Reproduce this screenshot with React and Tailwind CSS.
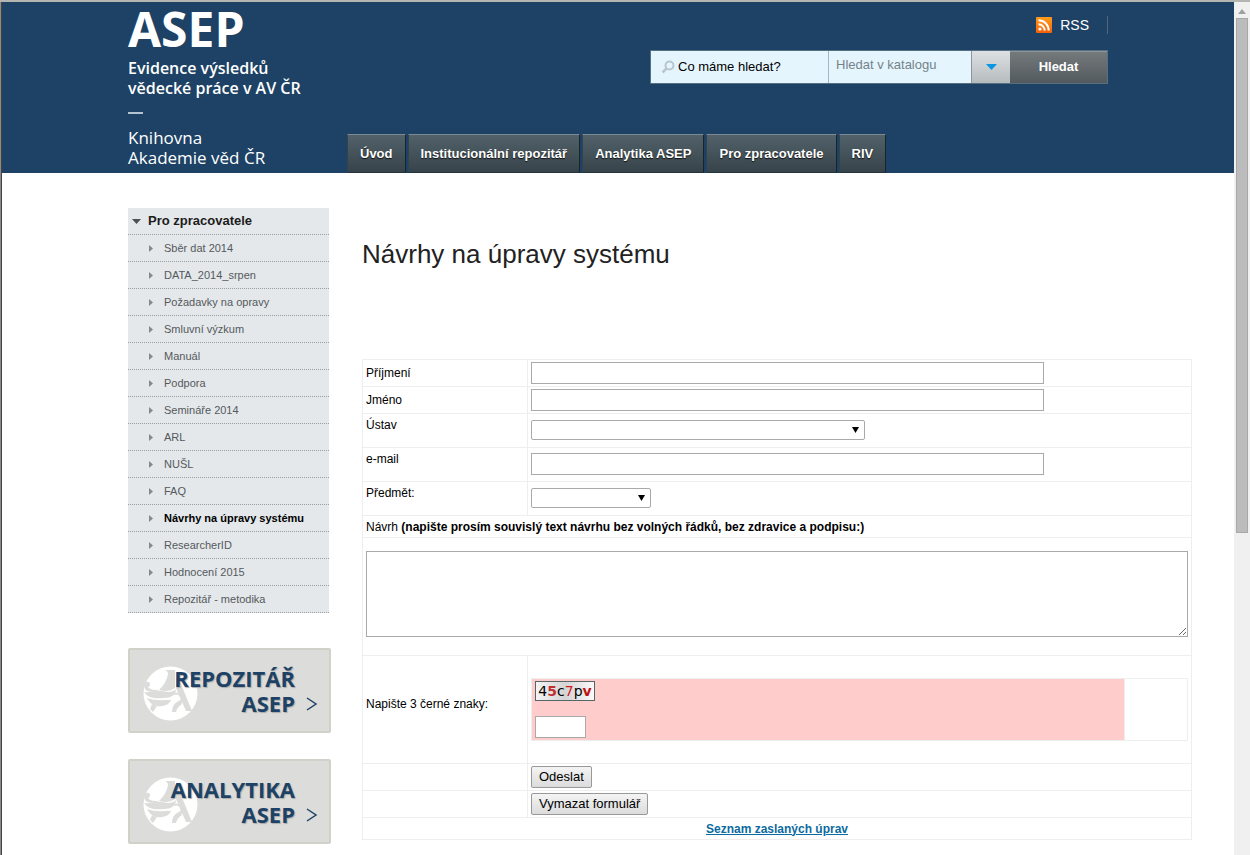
const mainNav = ['Úvod', 'Institucionální repozitář', 'Analytika ASEP', 'Pro zpracovatele', 'RIV'];

const sideNav = [
  'Sběr dat 2014',
  'DATA_2014_srpen',
  'Požadavky na opravy',
  'Smluvní výzkum',
  'Manuál',
  'Podpora',
  'Semináře 2014',
  'ARL',
  'NUŠL',
  'FAQ',
  'Návrhy na úpravy systému',
  'ResearcherID',
  'Hodnocení 2015',
  'Repozitář - metodika',
];

const activeItem = 'Návrhy na úpravy systému';

function RssIcon() {
  return (
    <svg className="h-4 w-4" viewBox="0 0 16 16" aria-hidden="true">
      <defs>
        <linearGradient id="rss" x1="0" y1="0" x2="0" y2="1">
          <stop offset="0" stopColor="#ff9c1a" />
          <stop offset="1" stopColor="#f4610c" />
        </linearGradient>
      </defs>
      <rect width="16" height="16" rx="1" fill="url(#rss)" />
      <circle cx="4" cy="12" r="1.6" fill="#fff" />
      <path d="M2.5 7.3a6.2 6.2 0 0 1 6.2 6.2M2.5 3.3a10.2 10.2 0 0 1 10.2 10.2" fill="none" stroke="#fff" strokeWidth="2" />
    </svg>
  );
}

function Emblem() {
  return (
    <svg className="h-[55px] w-[55px]" viewBox="0 0 55 55" aria-hidden="true">
      <circle cx="27.5" cy="27.5" r="27" fill="#fff" />
      <g fill="#dcdddb">
        <path d="M22 4h10v18c-4 3-10 4-16 2 5-5 8-10 9-16 0-2-1-3-3-4z" />
        <path d="M2 18c0-3 5-3 5 0 0 2-1 3-2 3 2 3 7 3 11 3-6 3-12 2-14-1-1-2-1-3 0-5z" />
        <path d="M1 26c6 1 10-2 17-1 6 1 11 2 15-2 0 6-5 9-12 9C12 33 5 32 1 26z" />
        <path d="M4 32c7 3 16 2 24 2-2 5-8 7-14 6-5-1-8-4-10-8z" />
        <path d="M9 38l5 2-4 6-3-3z" />
        <path d="M34 10l4 8 11 27h-6L33 22z" />
        <path d="M29 46c0-6 3-10 9-12l1 4c-3 2-5 4-6 8z" />
      </g>
      <path d="M30 28c6-2 10 2 8 8" fill="none" stroke="#dcdddb" strokeWidth="2" />
    </svg>
  );
}

function Header() {
  return (
    <header className="flex h-[171px] items-stretch bg-[#1d4265] pr-[126px] pl-[126px] text-white">
      <a href="#" className="w-[219px] shrink-0 font-['Open_Sans',sans-serif]">
        <span className="block text-[48px] leading-[54px] font-bold">ASEP</span>
        <span className="mt-[2px] block text-base leading-5 font-semibold whitespace-nowrap">
          Evidence výsledků
          <br />
          vědecké práce v AV ČR
        </span>
        <span className="mt-[14px] mb-[14px] block h-[2px] w-[15px] bg-[#b4c3d0]" />
        <span className="block text-[17px] leading-5 whitespace-nowrap">
          Knihovna
          <br />
          Akademie věd ČR
        </span>
      </a>
      <div className="flex flex-1 flex-col justify-between">
        <div className="flex flex-col items-end pt-[14px]">
          <a href="#" className="flex h-[18px] items-center gap-2 border-r border-[#4f687f] pr-[18px] text-sm">
            <RssIcon />
            RSS
          </a>
          <form className="mt-4 flex h-[34px] w-[458px] border border-[#55707f] text-sm" onSubmit={(e) => e.preventDefault()}>
            <label htmlFor="q" className="flex w-[177px] items-center bg-[#e5f5fe] pl-[10px] text-[13px] text-black">
              <svg className="mr-[3px] h-[14px] w-[14px]" viewBox="0 0 14 14" fill="none" stroke="#b9c6cf" aria-hidden="true">
                <circle cx="8.5" cy="5.5" r="4" strokeWidth="2" />
                <path d="M5.500 8.500L1.500 12.500" strokeWidth="2.500" />
              </svg>
              Co máme hledat?
            </label>
            <input
              id="q"
              placeholder="Hledat v katalogu"
              className="min-w-0 flex-1 border-l border-[#a3b6c2] bg-[#e5f5fe] px-[7px] pb-1 text-[13px] placeholder:text-[#75828a]"
            />
            <button type="button" aria-label="Katalogy" className="flex w-[39px] items-center justify-center border-l border-[#8c979d] bg-linear-to-b from-[#dde1e4] to-[#b6bbbe]">
              <svg className="h-[6px] w-[11px]" viewBox="0 0 11 6" fill="#0a96e4" aria-hidden="true">
                <path d="M0 0h11L5.500 6z" />
              </svg>
            </button>
            <button className="w-[97px] border-t border-[#8f9598] bg-linear-to-b from-[#74797c] to-[#535a5d] text-[13px] font-bold">Hledat</button>
          </form>
        </div>
        <nav className="flex gap-[2px]">
          {mainNav.map((item) => (
            <a
              key={item}
              href="#"
              className="flex h-[39px] items-center border border-t-[#7b8a91] border-r-[#17242c] border-b-[#26343b] border-l-[#2f4450] bg-linear-to-b from-[#52626a] to-[#37434a] px-3 text-[13px] font-bold whitespace-nowrap text-shadow-[0_1px_1px_#111]"
            >
              {item}
            </a>
          ))}
        </nav>
      </div>
    </header>
  );
}

function Banner({ title }) {
  return (
    <a href="#" className="relative flex h-[85px] items-center rounded-xs border-2 border-[#d0d1c9] bg-[#dcdddb] font-['Open_Sans',sans-serif] text-[#1d4265]">
      <span className="absolute top-4 left-[13px]">
        <Emblem />
      </span>
      <span className="relative w-[165px] text-right text-[22px] leading-[25px] font-bold whitespace-nowrap text-shadow-[1px_1px_1px_#aaa]">
        <span className="block">{title}</span>
        <span className="block">ASEP</span>
      </span>
      <svg className="relative mt-[26px] ml-[11px] h-[14px] w-3" viewBox="0 0 12 14" fill="none" stroke="#1d4265" strokeWidth="1.500" aria-hidden="true">
        <path d="M1 1l9 6-9 6" />
      </svg>
    </a>
  );
}

function Sidebar() {
  return (
    <aside className="w-[203px] shrink-0">
      <nav className="mr-[2px] bg-[#e4e8eb]">
        <a href="#" className="flex h-[27px] items-center border-b border-dotted border-[#9a9ea1] pl-1 text-[13px] font-bold text-[#1c1c1c]">
          <svg className="mr-[7px] h-[5px] w-[9px]" viewBox="0 0 9 5" fill="#4c5154" aria-hidden="true">
            <path d="M0 0h9L4.500 5z" />
          </svg>
          Pro zpracovatele
        </a>
        <ul>
          {sideNav.map((item) => (
            <li key={item} className="border-b border-dotted border-[#9a9ea1]">
              <a
                href="#"
                className={`flex h-[26px] items-center pl-[21px] text-[11px] ${item === activeItem ? 'font-bold text-black' : 'text-[#55595c]'}`}
              >
                <svg className="mr-[11px] h-[7px] w-1" viewBox="0 0 4 7" fill="#85898c" aria-hidden="true">
                  <path d="M0 0l4 3.500L0 7z" />
                </svg>
                {item}
              </a>
            </li>
          ))}
        </ul>
      </nav>
      <div className="mt-[35px] flex flex-col gap-[26px]">
        <Banner title="REPOZITÁŘ" />
        <Banner title="ANALYTIKA" />
      </div>
    </aside>
  );
}

const cell = 'border border-[#eee] px-[3px] py-0';
const field = 'block border border-[#a9a9a9] bg-white';

function SelectField({ id, className }) {
  return (
    <span className={`relative block h-5 ${className}`}>
      <select id={id} className="block h-5 w-full appearance-none rounded-xs border border-[#a9a9a9] bg-white">
        <option></option>
      </select>
      <svg className="pointer-events-none absolute top-[7px] right-[6px] h-[6px] w-[7px]" viewBox="0 0 7 6" aria-hidden="true">
        <path d="M0 0h7L3.500 6z" />
      </svg>
    </span>
  );
}

function Captcha() {
  return (
    <span role="img" aria-label="45c7pv" className="flex h-5 w-[60px] items-center justify-center border border-[#556666] bg-linear-to-r from-[#f4f4f4] via-[#d4d4d4] to-[#fafafa] font-['DejaVu_Sans',sans-serif] text-sm leading-4">
      4<b className="text-[#c03030]">5</b>c<span className="text-[#d01c1c]">7</span>p<b className="text-[#c01414]">v</b>
    </span>
  );
}

function SuggestionForm() {
  return (
    <form onSubmit={(e) => e.preventDefault()}>
      <table className="w-full table-fixed border-collapse text-xs text-black">
        <colgroup>
          <col className="w-[165px]" />
          <col />
        </colgroup>
        <tbody>
          <tr className="h-[27px]">
            <td className={cell}><label htmlFor="surname">Příjmení</label></td>
            <td className={cell}><input id="surname" className={`${field} h-[22px] w-[513px]`} /></td>
          </tr>
          <tr className="h-[27px]">
            <td className={cell}><label htmlFor="name">Jméno</label></td>
            <td className={cell}><input id="name" className={`${field} h-[22px] w-[513px]`} /></td>
          </tr>
          <tr className="h-[34px]">
            <td className={`${cell} pt-[3px] align-top`}><label htmlFor="institute">Ústav</label></td>
            <td className={`${cell} pb-[2px]`}><SelectField id="institute" className="w-[334px]" /></td>
          </tr>
          <tr className="h-[34px]">
            <td className={`${cell} pt-[3px] align-top`}><label htmlFor="email">e-mail</label></td>
            <td className={`${cell} pb-[2px]`}><input id="email" type="email" className={`${field} h-[22px] w-[513px]`} /></td>
          </tr>
          <tr className="h-[34px]">
            <td className={`${cell} pt-[3px] align-top`}><label htmlFor="subject">Předmět:</label></td>
            <td className={`${cell} pb-[2px]`}><SelectField id="subject" className="w-[120px]" /></td>
          </tr>
          <tr className="h-[22px]">
            <td colSpan="2" className={cell}>
              <label htmlFor="text">
                Návrh <b>(napište prosím souvislý text návrhu bez volných řádků, bez zdravice a podpisu:)</b>
              </label>
            </td>
          </tr>
          <tr className="h-[118px]">
            <td colSpan="2" className={`${cell} pt-[13px] align-top`}>
              <textarea id="text" className={`${field} h-[86px] w-full`} />
            </td>
          </tr>
          <tr className="h-[108px]">
            <td className={`${cell} pb-3`}><label htmlFor="code">Napište 3 černé znaky:</label></td>
            <td className={cell}>
              <table className="w-full table-fixed border-collapse">
                <tbody>
                  <tr>
                    <td className="border border-[#eee] bg-[#fcc] px-[3px] py-[2px]">
                      <Captcha />
                      <input id="code" className={`${field} mt-[15px] h-[22px] w-[51px]`} />
                    </td>
                    <td className="w-[63px] border border-[#eee]"></td>
                  </tr>
                </tbody>
              </table>
            </td>
          </tr>
          <tr className="h-[27px]">
            <td className={cell}></td>
            <td className={cell}>
              <button className="block h-[22px] rounded-xs border border-[#999] bg-linear-to-b from-[#f4f4f4] to-[#dcdcdc] px-[7px] text-[13px] leading-5">Odeslat</button>
            </td>
          </tr>
          <tr className="h-[27px]">
            <td className={cell}></td>
            <td className={cell}>
              <button type="reset" className="block h-[22px] rounded-xs border border-[#999] bg-linear-to-b from-[#f4f4f4] to-[#dcdcdc] px-[7px] text-[13px] leading-5">Vymazat formulář</button>
            </td>
          </tr>
          <tr className="h-[22px]">
            <td colSpan="2" className={`${cell} text-center`}>
              <a href="#" className="font-bold text-[#0b6a9f] underline">Seznam zaslaných úprav</a>
            </td>
          </tr>
        </tbody>
      </table>
    </form>
  );
}

function Scrollbar() {
  return (
    <div className="flex w-4 shrink-0 flex-col bg-[#f0f0f0] px-[2px]" aria-hidden="true">
      <svg className="mx-auto mt-[7px] h-[5px] w-2" viewBox="0 0 8 5" fill="#a0a0a0">
        <path d="M4 0l4 5H0z" />
      </svg>
      <div className="mt-1 h-[515px] w-3 border border-[#a8a8a8] bg-[#bcbcbc]" />
    </div>
  );
}

export default function App() {
  return (
    <div className="flex h-screen overflow-hidden border-t-2 border-[#b4b4b0] bg-white font-['Liberation_Sans',Arial,sans-serif]">
      <div className="w-[2px] shrink-0 border-r border-[#444] bg-[#8a8a8a]" />
      <div className="min-w-0 flex-1">
        <Header />
        <div className="flex gap-[31px] pt-[35px] pr-[42px] pl-[126px]">
          <Sidebar />
          <main className="min-w-0 flex-1">
            <h1 className="mt-[30px] mb-[89px] text-[26px] leading-8 text-[#222]">Návrhy na úpravy systému</h1>
            <SuggestionForm />
          </main>
        </div>
      </div>
      <Scrollbar />
    </div>
  );
}
